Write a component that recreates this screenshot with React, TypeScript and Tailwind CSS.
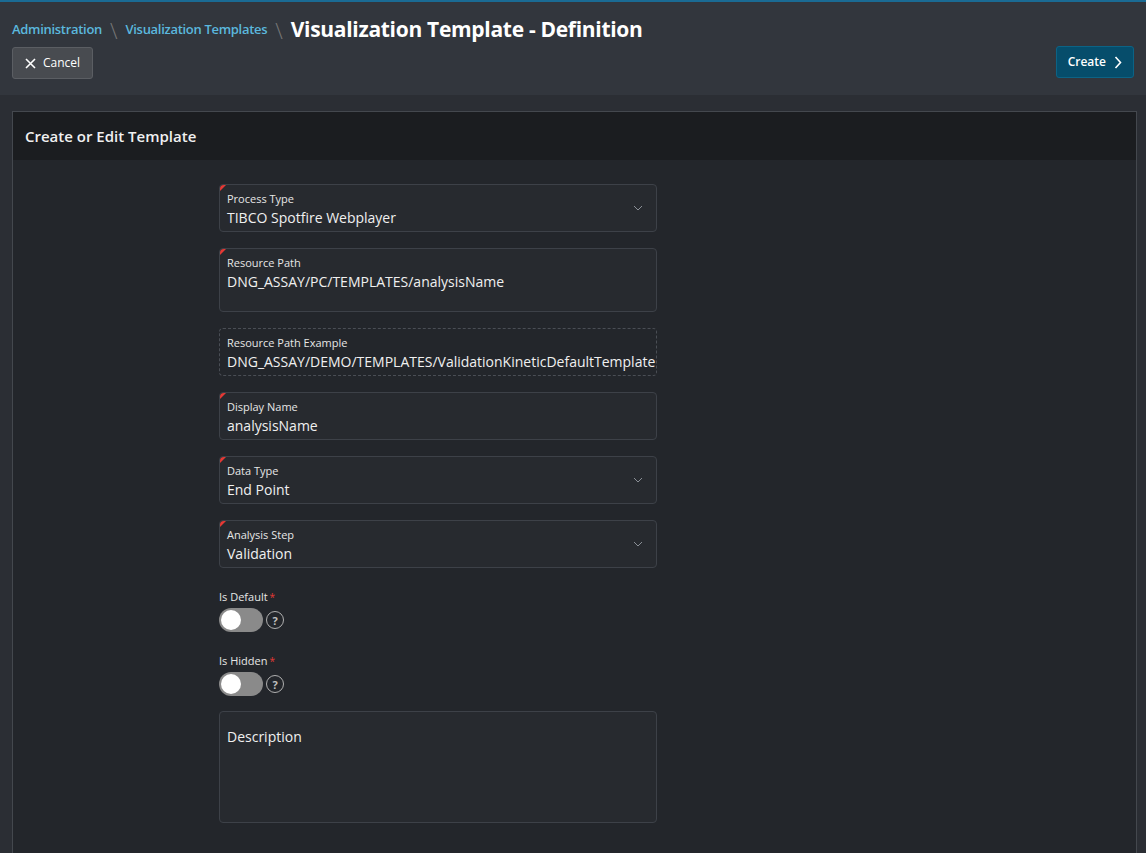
import React from "react";

const Corner = () => (
  <span className="absolute left-0 top-0 w-0 h-0 border-t-[6px] border-r-[6px] border-t-[#e53935] border-r-transparent rounded-tl-[4px]" />
);

const Chevron = () => (
  <svg width="10" height="6" viewBox="0 0 10 6" className="absolute right-[13px] top-[20px]">
    <path d="M1 1l4 4 4-4" fill="none" stroke="#8a8f96" strokeWidth="1" />
  </svg>
);

function Field({ label, value, select, tall, dashed }: { label: string; value: string; select?: boolean; tall?: boolean; dashed?: boolean }) {
  return (
    <div
      className={`relative rounded-[4px] px-[7px] pt-[7px] ${tall ? "h-[64px]" : "h-[48px]"} ${
        dashed ? "border border-dashed border-[#4a4e55] bg-transparent" : "border border-[#3d4148] bg-[#272a2f]"
      }`}
    >
      {!dashed && <Corner />}
      <div className="text-[11px] leading-[14px] text-[#e6e6e6]">{label}</div>
      <div className="text-[14px] leading-[20px] mt-[2px] text-[#f0f0f0]">{value}</div>
      {select && <Chevron />}
    </div>
  );
}

function Toggle({ label }: { label: string }) {
  return (
    <div>
      <div className="text-[11px] leading-[14px] text-[#e6e6e6]">
        {label}
        <span className="text-[#e53935] text-[10px] align-top ml-[2px]">*</span>
      </div>
      <div className="flex items-center gap-[3px] mt-[4px]">
        <div className="w-[44px] h-[24px] rounded-full bg-[#8a8a8a] relative">
          <div className="absolute left-[2px] top-[2px] w-[20px] h-[20px] rounded-full bg-white" />
        </div>
        <div className="w-[18px] h-[18px] rounded-full border-[1.5px] border-[#b0b0b0] text-[#c0c0c0] text-[11px] font-bold flex items-center justify-center leading-none">
          ?
        </div>
      </div>
    </div>
  );
}

export default function App() {
  return (
    <div className="w-[1146px] h-[853px] bg-[#2b2e34] overflow-hidden" style={{ fontFamily: "'Open Sans', 'Noto Sans', sans-serif" }}>
      <div className="h-[95px] bg-[#32363d] border-t-2 border-[#1a6b94] px-[12px] pt-[14px] flex justify-between">
        <div>
          <div className="flex items-center gap-[8px] h-[28px]">
            <span className="text-[13px] font-semibold text-[#5bb8de] tracking-[-0.3px]">Administration</span>
            <span className="text-[22px] text-[#777] font-light">\</span>
            <span className="text-[13px] font-semibold text-[#5bb8de] tracking-[-0.3px]">Visualization Templates</span>
            <span className="text-[22px] text-[#777] font-light">\</span>
            <span className="text-[21px] font-bold text-white tracking-[-0.3px]">Visualization Template - Definition</span>
          </div>
          <button className="mt-[3px] h-[32px] px-[12px] flex items-center gap-[7px] rounded-[3px] bg-[#484b50] border border-[#5b5e63] text-[12px] text-white">
            <svg width="11" height="11" viewBox="0 0 11 11"><path d="M1 1l9 9M10 1l-9 9" stroke="white" strokeWidth="1.6" /></svg>
            Cancel
          </button>
        </div>
        <button className="mt-[30px] h-[32px] px-[11px] flex items-center gap-[8px] rounded-[3px] bg-[#064d6b] border border-[#0c6385] text-[12px] font-semibold text-white">
          Create
          <svg width="8" height="13" viewBox="0 0 8 13"><path d="M1.5 1l5 5.5-5 5.5" fill="none" stroke="white" strokeWidth="1.6" /></svg>
        </button>
      </div>
      <div className="px-[12px] pt-[16px] pr-[9px]">
        <div className="border border-[#44484e] h-[760px]">
          <div className="h-[48px] bg-[#1b1d20] flex items-center px-[12px] text-[15px] font-semibold text-[#f0f0f0]">Create or Edit Template</div>
          <div className="bg-[#23262b] h-full pl-[206px] pt-[24px]">
            <div className="w-[438px] flex flex-col gap-[16px]">
              <Field label="Process Type" value="TIBCO Spotfire Webplayer" select />
              <Field label="Resource Path" value="DNG_ASSAY/PC/TEMPLATES/analysisName" tall />
              <Field label="Resource Path Example" value="DNG_ASSAY/DEMO/TEMPLATES/ValidationKineticDefaultTemplate" dashed />
              <Field label="Display Name" value="analysisName" />
              <Field label="Data Type" value="End Point" select />
              <Field label="Analysis Step" value="Validation" select />
              <div className="flex flex-col gap-[22px] mt-[6px]">
                <Toggle label="Is Default" />
                <Toggle label="Is Hidden" />
              </div>
              <div className="h-[112px] border border-[#3d4148] bg-[#272a2f] rounded-[4px] px-[7px] pt-[14px] text-[14px] text-[#f0f0f0] -mt-[1px]">
                Description
              </div>
            </div>
          </div>
        </div>
      </div>
    </div>
  );
}
